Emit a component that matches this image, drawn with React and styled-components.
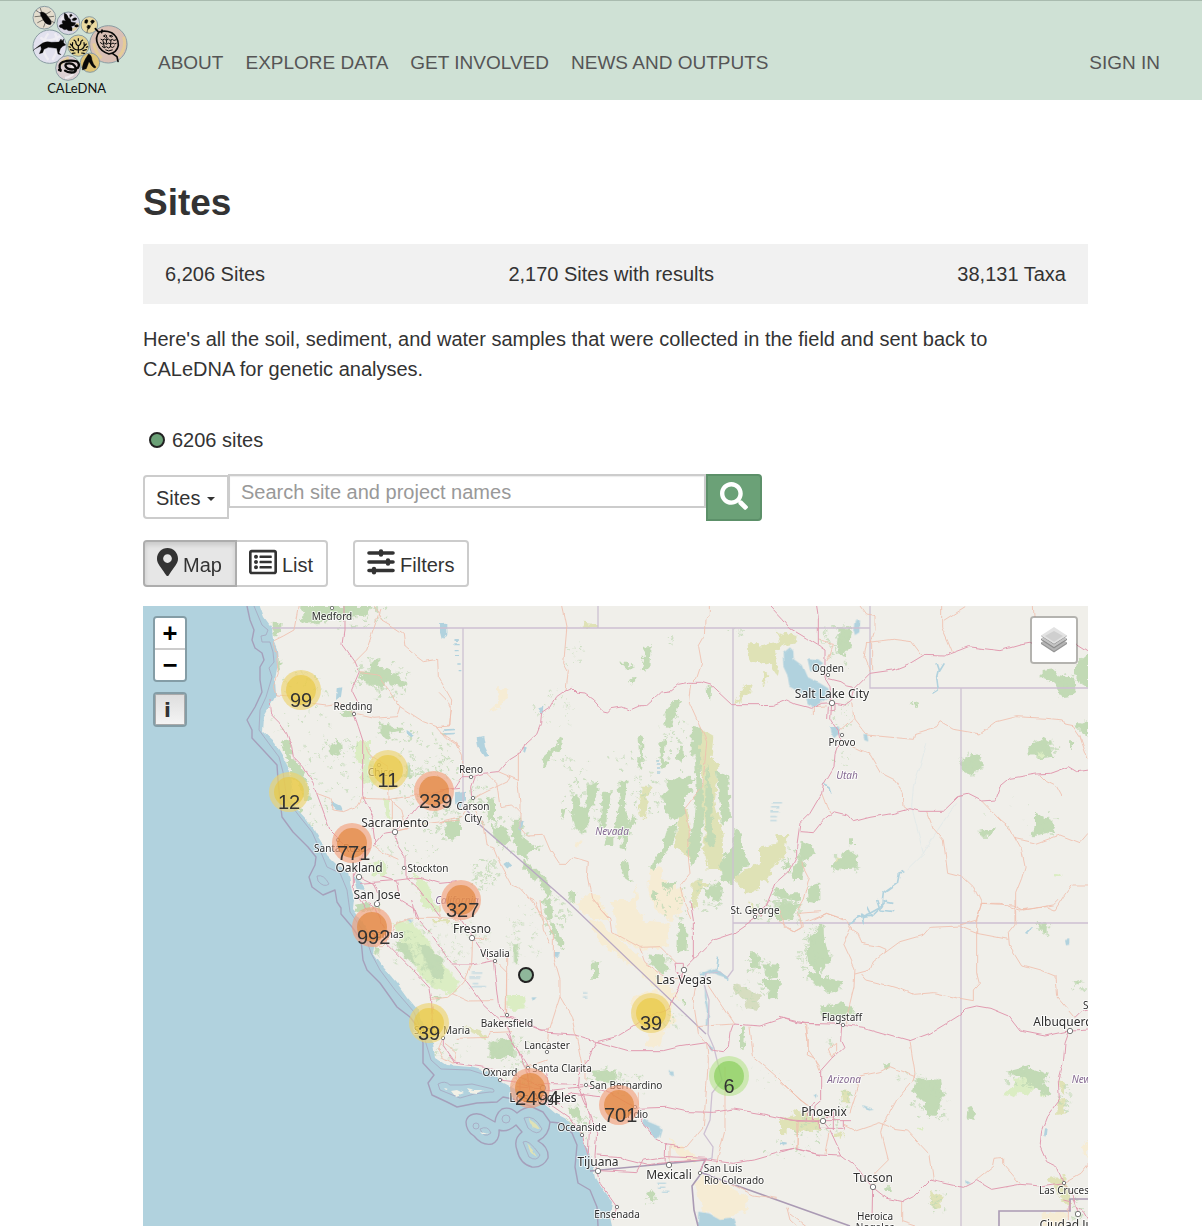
import React from "react";
import styled, { createGlobalStyle, css } from "styled-components";
import { FaMapMarkerAlt, FaRegListAlt, FaSearch } from "react-icons/fa";

const GlobalStyle = createGlobalStyle`
  *, *::before, *::after { box-sizing: border-box; }
  body {
    margin: 0;
    background: #fff;
    color: #333;
    font: 20px/30px "Liberation Sans", Arial, sans-serif;
  }
  button, input, select { font: inherit; color: inherit; margin: 0; }
`;

const Header = styled.header`
  display: flex;
  align-items: flex-start;
  height: 100px;
  padding: 0 42px 0 25px;
  background: #cfe1d5;
  border-top: 1px solid #a9bbaf;
`;

const LogoLink = styled.a`
  display: block;
  flex: none;
  width: 110px;
  height: 99px;
  margin-right: 23px;
`;

const Nav = styled.nav`
  display: flex;
  flex: 1;
  gap: 22px;
  padding-top: 47px;
  font-size: 19px;
`;

const NavLink = styled.a`
  color: #555;
  text-decoration: none;
  white-space: nowrap;
  ${(p) => p.$end && css`margin-left: auto;`}
`;

const Main = styled.main`
  padding: 80px 114px 0 143px;
`;

const Title = styled.h1`
  margin: 0 0 18px;
  font-size: 37px;
  line-height: 46px;
  font-weight: 700;
`;

const Stats = styled.div`
  display: flex;
  justify-content: space-between;
  padding: 15px 22px;
  background: #f1f1f1;
`;

const Intro = styled.p`
  margin: 20px 0 41px;
  padding-right: 20px;
`;

const Count = styled.div`
  display: flex;
  align-items: center;
  gap: 7px;
  padding-left: 6px;
`;

const Dot = styled.span`
  width: 16px;
  height: 16px;
  border: 2px solid #222;
  border-radius: 50%;
  background: #6ba177;
`;

const SearchForm = styled.form`
  display: flex;
  align-items: flex-start;
  width: 619px;
  max-width: 100%;
  margin-top: 19px;
`;

const ScopeBox = styled.label`
  position: relative;
  flex: none;
  margin-top: 1px;
  svg {
    position: absolute;
    right: 14px;
    top: 22px;
    pointer-events: none;
  }
`;

const Scope = styled.select`
  appearance: none;
  display: block;
  width: 86px;
  height: 44px;
  padding: 2px 11px 0;
  border: 2px solid #ccc;
  border-radius: 4px 0 0 4px;
  background: #fff;
`;

const SearchInput = styled.input`
  flex: 1;
  min-width: 0;
  height: 34px;
  margin-left: -1px;
  padding: 2px 11px 0;
  border: 2px solid #ccc;
  border-radius: 0;
  background: #fff;
  box-shadow: inset 0 1px 1px rgba(0, 0, 0, 0.08);
  &::placeholder { color: #999; opacity: 1; }
`;

const SearchButton = styled.button`
  display: flex;
  align-items: center;
  justify-content: center;
  width: 56px;
  height: 47px;
  padding: 0 0 3px;
  color: #fff;
  background: #6ba177;
  border: 2px solid #5c9069;
  border-radius: 0 4px 4px 0;
`;

const Toolbar = styled.div`
  display: flex;
  gap: 25px;
  margin: 19px 0;
`;

const Group = styled.div`
  display: flex;
`;

const ToolButton = styled.button`
  display: flex;
  align-items: center;
  gap: 5px;
  height: 47px;
  padding: 0 13px 0 12px;
  border: 2px solid #ccc;
  border-radius: ${(p) => p.$radius || "4px"};
  background: #fff;
  svg { margin-bottom: 3px; }
  span { padding-top: 3px; }
  & + & { margin-left: -2px; }
  ${(p) => p.$active && css`
    position: relative;
    z-index: 1;
    background: #e6e6e6;
    border-color: #adadad;
    box-shadow: inset 0 3px 5px rgba(0, 0, 0, 0.13);
  `}
`;

const PinIcon = styled(FaMapMarkerAlt)`
  width: 21px;
  height: 28px;
`;

const MapFrame = styled.section`
  position: relative;
  height: 620px;
  overflow: hidden;
  background: #f0efea;
`;

const Tiles = styled.svg`
  display: block;
`;

const MapLabel = styled.text`
  font-family: "Noto Sans", sans-serif;
  font-size: ${(p) => (p.$big ? "12px" : "10px")};
  font-style: ${(p) => (p.$state ? "italic" : "normal")};
  fill: ${(p) => (p.$state ? "#856a92" : "#2e2e2e")};
  text-anchor: middle;
  paint-order: stroke;
  stroke: rgba(255, 255, 255, 0.75);
  stroke-width: 2px;
  stroke-linejoin: round;
`;

const tones = {
  yellow: ["rgba(236, 211, 110, 0.65)", "rgba(233, 198, 60, 0.6)"],
  orange: ["rgba(242, 160, 125, 0.65)", "rgba(224, 132, 55, 0.65)"],
  green: ["rgba(181, 226, 140, 0.6)", "rgba(118, 200, 70, 0.55)"],
};

const Cluster = styled.button`
  position: absolute;
  left: ${(p) => p.$x}px;
  top: ${(p) => p.$y}px;
  width: 40px;
  height: 40px;
  padding: 5px;
  border: 0;
  border-radius: 50%;
  background: ${(p) => tones[p.$tone][0]};
  span {
    display: block;
    width: 30px;
    height: 30px;
    border-radius: 50%;
    line-height: 50px;
    text-align: center;
    white-space: nowrap;
    background: ${(p) => tones[p.$tone][1]};
  }
`;

const SiteMarker = styled.button`
  position: absolute;
  left: ${(p) => p.$x}px;
  top: ${(p) => p.$y}px;
  width: 16px;
  height: 16px;
  padding: 0;
  border: 2px solid #222;
  border-radius: 50%;
  background: #8fb79b;
`;

const Controls = styled.div`
  position: absolute;
  top: 10px;
  ${(p) => p.$side}: 10px;
  display: flex;
  flex-direction: column;
  gap: 10px;
`;

const ControlBar = styled.div`
  border: 2px solid rgba(0, 0, 0, 0.25);
  border-radius: 4px;
  background-clip: padding-box;
  overflow: hidden;
`;

const ControlButton = styled.button`
  display: flex;
  align-items: center;
  justify-content: center;
  width: ${(p) => p.$size || 30}px;
  height: ${(p) => p.$size || 30}px;
  padding: 0;
  border: 0;
  background: #fff;
  color: #000;
  font: 700 24px/28px "DejaVu Sans Mono", monospace;
  & + & { height: 32px; border-top: 2px solid #ccc; }
`;

const InfoButton = styled.button`
  display: block;
  width: 30px;
  height: 31px;
  padding: 0 8px;
  border: 1px solid #aaa;
  background: linear-gradient(#dedede, #f4f4f4);
  text-align: left;
  font: 700 20px/30px "DejaVu Sans", sans-serif;
`;

/* Map drawing ---------------------------------------------------------- */

function scatter(cx, cy, rx, ry, count, size) {
  let seed = Math.round(cx * 31 + cy * 17) % 9973 + 7;
  const next = () => {
    seed = (seed * 16807) % 2147483647;
    return seed / 2147483647;
  };
  for (let i = 0; i < 5; i += 1) next();
  let d = "";
  for (let i = 0; i < count; i += 1) {
    const a = next() * 6.283;
    const r = Math.sqrt(next());
    const w = size * (0.4 + next());
    const h = size * (0.4 + next());
    const x = Math.round(cx + Math.cos(a) * r * rx);
    const y = Math.round(cy + Math.sin(a) * r * ry);
    d += `M${x} ${y}h${w.toFixed(1)}l${(w / 3).toFixed(1)} ${h.toFixed(1)}h${(-w).toFixed(1)}z`;
  }
  return d;
}

const FOREST = "#c2dab5";
const MEADOW = "#dbedc3";
const SCRUB = "#dfe2b6";
const SAND = "#f6ecd4";
const WATER = "#b1d2de";

/* Each sheet is surveyed at three units to the pixel from its own origin. */
const sheets = [
  {
    x: 140, y: 600,
    areas: [
      [MEADOW, "M650 430 690 425 690 470 720 520 700 560 660 540 670 500 645 480ZM690 790 730 780 745 820 700 830ZM730 600 750 600 752 660 738 650ZM820 820 860 850 900 940 850 920Z"],
      [FOREST, "M480 18 690 18 680 40 640 55 600 50 570 60 530 68 500 72 480 60 495 40ZM395 65 425 68 422 100 405 112 395 90ZM690 185 715 180 715 200 745 205 755 225 775 215 775 235 790 240 800 250 780 262 740 245 735 265 715 262 690 250 660 238 665 215 690 215ZM720 365 760 380 790 380 785 395 755 400 745 420 722 400ZM572 435 600 425 603 460 580 470 568 455ZM425 425 450 420 455 470 480 500 500 540 510 570 512 600 495 610 480 560 455 530 440 480ZM595 340 640 330 640 345 610 350ZM645 915 690 905 700 930 650 940ZM920 665 960 655 960 710 920 715ZM800 490 815 510 810 535 795 530ZM412 185 420 180 422 200 412 212ZM475 630 490 628 490 640 478 640Z"],
      [WATER, "M900 70 920 68 922 105 912 120 900 100ZM570 605 600 620 605 632 590 630 572 615ZM640 830 665 850 678 870 650 868ZM800 390 822 405 815 412 800 402ZM590 265 604 262 600 290 588 300ZM908 388 942 386 942 389 908 391ZM908 400 942 398 942 401 908 403ZM942 118 954 118 954 122 942 122ZM942 132 956 132 956 136 942 136ZM944 150 956 150 956 154 944 154ZM950 600 960 580 960 620Z"],
    ],
    flecks: [[620, 40, 130, 40, 50, 9], [720, 230, 90, 70, 60, 8], [760, 390, 60, 40, 26, 7], [480, 350, 90, 150, 60, 5], [590, 440, 50, 40, 20, 6], [520, 560, 80, 130, 50, 5], [860, 460, 90, 80, 60, 6], [800, 560, 60, 60, 30, 6], [900, 660, 60, 60, 50, 8], [650, 520, 50, 110, 40, 5], [800, 780, 120, 70, 40, 5]],
    main: ["M612 18 612 90 606 130 645 185 658 215 635 270 655 310 642 342 655 380 668 420 668 590 700 650 700 690 706 735", "M764 695 730 700 700 735 670 760 655 800 640 830", "M764 695 775 740 795 770 795 830 830 860 870 910 900 950", "M764 695 800 660 840 610 880 580 920 570 960 565", "M657 830 700 850 720 900 710 912M640 820 640 870 660 900 680 930M660 850 760 842 840 832 900 850 950 845M725 830 770 845 780 900 820 925 835 960", "M530 580 545 620 570 690 600 720 640 760", "M390 300 395 345 420 370 440 400 455 440 460 470 490 500 520 550 530 580"],
    minor: ["M475 18 462 90 430 108 398 124 408 160 415 220 400 260 408 285 450 288 500 308 560 315 600 310 642 342", "M700 18 725 60 760 80 790 100 795 140 830 170 850 185 893 178 895 230 935 300 930 375 890 380 850 365 780 320 715 225 660 218", "M720 30 700 90 680 150 640 190", "M642 342 700 355 770 350 780 320M890 380 920 415 960 440", "M668 420 690 465 745 500 747 600 757 600 757 690", "M530 580 570 595 580 630 610 635 650 620 665 595 750 598 830 585 870 575M700 735 725 755 775 778M750 600 785 630 800 690 765 696M775 695 860 670 960 660"],
  },
  {
    x: 440, y: 600,
    areas: [
      [SAND, "M175 265 205 265 203 290 180 320 150 340 170 310ZM408 720 425 722 420 745 412 740ZM630 810 665 800 665 830 690 850 715 860 735 880 725 940 690 960 640 920 625 870ZM430 890 470 880 490 920 510 960 460 960 410 920ZM590 855 595 900 580 905Z"],
      [SCRUB, "M770 380 820 410 815 470 835 500 825 600 848 700 850 810 800 810 790 740 795 690 780 600 790 520 770 500ZM715 640 745 630 750 700 750 780 705 740ZM755 850 780 840 805 850 780 880 770 920 752 920ZM885 830 960 785 960 870 920 880 890 850ZM430 68 472 72 470 82 428 80ZM920 130 960 130 960 190 925 180ZM910 260 935 245 930 280 885 310ZM605 560 635 560 620 600 615 660 598 640Z"],
      [FOREST, "M610 140 632 138 628 200 618 218 605 210 612 180ZM540 185 560 185 582 205 565 210ZM572 235 588 235 580 255 570 245ZM705 300 720 300 705 350 690 380 670 375 680 330ZM360 410 370 415 365 445 335 465 315 500 305 505 315 465 345 440ZM595 410 607 400 610 440 603 510 590 500 600 455ZM655 430 680 410 672 480 690 490 665 510ZM720 440 732 440 728 490 710 475ZM535 545 560 545 555 600 560 640 570 670 585 640 590 660 570 690 560 750 545 745 545 715 520 705 525 660 540 610ZM440 560 475 545 465 610 445 640 445 690 410 695 395 640 398 590 415 585 418 620 440 620ZM490 575 515 570 512 620 500 650 500 680 478 685 480 640ZM500 710 520 710 520 745 490 735ZM360 625 378 620 368 660ZM680 540 740 530 765 540 745 560 760 575 735 590 735 640 700 660 675 640 668 580 680 570ZM680 690 710 665 705 710 670 775 640 810 630 805 640 775 665 755ZM755 380 785 385 780 450 785 580 790 640 780 760 755 800 740 740 760 680 765 600 770 560 765 480 755 450ZM830 510 865 530 870 665 845 675 838 600ZM800 490 820 600 815 680 830 740 800 730 795 600ZM855 760 880 740 880 690 895 680 910 750 930 795 910 800 880 850 850 845 840 800ZM540 795 558 780 565 820 575 850 555 835ZM665 850 705 845 695 865 668 865ZM790 870 840 850 845 905 800 890ZM640 870 652 875 650 905 640 900ZM220 655 240 660 245 710 290 745 315 740 260 760 260 780 235 765 215 710ZM150 675 200 680 210 730 180 735ZM250 780 280 800 320 840 340 880 320 890 300 845 250 810ZM310 890 330 895 340 960 320 960ZM20 665 60 665 60 710 20 705ZM140 590 165 600 165 660 145 665ZM385 880 410 875 405 905 385 900ZM800 260 815 258 810 305 802 290Z"],
      [WATER, "M110 412 130 408 135 440 148 468 135 470 115 440ZM48 580 75 575 75 600 60 625 48 610ZM0 70 22 70 22 100 5 120 0 100ZM190 795 205 785 215 795 200 807ZM238 660 250 665 245 695 238 685ZM252 440 260 442 255 458 250 455ZM295 325 310 320 308 345ZM40 118 52 118 52 122 40 122ZM40 130 52 130 52 134 40 134ZM48 165 58 165 58 168 48 168ZM52 190 62 190 62 194 52 194ZM56 210 64 210 64 214 56 214ZM646 478 658 478 658 482 646 482ZM647 490 658 490 658 494 647 494ZM648 502 658 502 658 506 648 506ZM648 514 658 514 658 518 648 518ZM10 390 42 388 42 391 10 393ZM10 402 40 400 40 403 10 405Z"],
    ],
    flecks: [[400, 150, 30, 50, 16, 5], [350, 320, 70, 60, 30, 4], [690, 420, 50, 120, 40, 6], [380, 500, 70, 40, 14, 6], [620, 580, 50, 70, 40, 7], [420, 610, 60, 80, 30, 7], [130, 820, 50, 50, 50, 7], [120, 600, 40, 70, 40, 6], [690, 900, 60, 60, 30, 7], [200, 700, 60, 60, 40, 7], [800, 880, 60, 50, 30, 7], [15, 500, 60, 50, 30, 6], [690, 115, 15, 20, 9, 6], [880, 95, 30, 12, 8, 5], [560, 480, 60, 50, 14, 6]],
    main: ["M0 570 45 565 68 530 100 530 130 520 175 515 205 480 245 455 255 432 290 400 302 370 305 340 332 322 350 290 375 272 397 262 415 280 435 282 460 300 490 333 503 336 512 326 545 321 568 331 600 317 620 317 650 290 665 276 690 273 715 253 745 247 785 247 812 255 875 314 960 314", "M103 530 92 560 95 592"],
    minor: ["M365 18 372 50 380 90 371 190 385 215 378 270", "M808 18 808 45 795 60 793 110 776 140 785 190 770 235 755 250 748 310 775 370 800 425 788 560 770 580 735 625 748 690 745 770 750 820 722 855 735 910 752 960", "M235 458 235 560 240 610 240 680 262 705 310 703 330 750 358 793 380 793 400 772 445 785 442 830 455 895 510 960", "M140 520 170 550 180 620 215 615 240 640M175 515 210 530 200 545 120 585 95 600M0 380 28 378 34 330 20 300 0 280M0 395 50 430 68 470 68 530M0 665 65 650 90 610 130 665 142 735 160 740 180 790 215 855 240 865 265 895 285 905 305 960M205 525 235 538"],
  },
  {
    x: 760, y: 600,
    areas: [
      [SCRUB, "M50 95 110 110 105 130 60 140 45 150 55 200 50 225 30 195 0 190 0 140 30 130 60 125ZM15 215 25 225 10 265 5 245ZM50 705 82 705 75 770 45 790 20 850 0 840 0 745 45 735ZM230 770 250 770 250 790 225 795Z"],
      [FOREST, "M235 85 275 85 272 140 250 170 235 150ZM845 210 880 205 895 225 940 235 950 255 940 290 900 295 890 260 865 235 845 230ZM945 195 984 160 984 265 960 250 945 225ZM945 375 984 360 984 410 965 395ZM605 480 650 462 665 470 665 500 635 520 605 515ZM805 440 850 412 870 425 880 470 840 475 810 460ZM825 640 845 650 880 660 880 695 815 710 825 680ZM658 692 708 682 695 710 665 710ZM125 725 160 740 165 760 135 780 125 840 95 840 88 820 115 780ZM215 800 240 770 265 750 295 770 290 805 230 810ZM145 860 178 850 178 910 140 905ZM45 860 85 880 120 880 120 905 75 895 40 880ZM70 790 92 785 92 805 72 810ZM262 715 282 715 282 735 265 732ZM460 300 480 308 468 318 455 312ZM930 420 943 425 930 448ZM45 935 100 945 100 960 45 960Z"],
      [MEADOW, "M885 822 905 824 900 834 885 832ZM830 455 850 450 855 468 835 470Z"],
      [WATER, "M68 160 90 142 97 150 98 175 125 195 140 230 180 250 205 265 210 290 160 322 140 310 135 285 88 260 82 225 70 200ZM142 175 175 178 190 190 175 200 180 215 150 210ZM285 60 300 58 298 100 285 108 280 90ZM212 382 235 382 242 400 232 405 222 415 214 400ZM35 610 66 610 66 613 35 613ZM33 622 58 622 58 625 33 625ZM31 634 56 634 56 637 31 637ZM31 648 48 648 48 651 31 651ZM31 660 47 660 47 663 31 663ZM310 405 322 405 325 425 313 420Z"],
    ],
    flecks: [[210, 110, 30, 40, 30, 6], [250, 110, 25, 40, 20, 7], [630, 490, 35, 30, 40, 7], [850, 445, 45, 30, 30, 7], [250, 340, 40, 50, 24, 5], [100, 790, 40, 50, 20, 7], [70, 915, 50, 30, 36, 8], [255, 785, 45, 35, 20, 7], [850, 670, 40, 40, 20, 6], [250, 470, 40, 30, 10, 4], [900, 240, 50, 45, 12, 7], [740, 640, 90, 60, 10, 3], [230, 180, 30, 30, 16, 6]],
    main: ["M30 18 65 55 90 85 140 115 172 135 195 150 195 235 210 260 215 308", "M170 18 175 50 175 135", "M0 317 40 316 80 300 105 312 155 325 185 310 215 308 255 315 275 300 285 265 330 220 400 210 450 190 490 166 550 168 600 150 625 140 720 152 780 135 820 128 950 130 984 152", "M215 308 212 360 235 395 240 420 225 460 222 500 190 555 185 580 150 640 120 670 110 740 110 770 90 810 45 850 20 910 0 950", "M120 695 160 698 190 660 220 635 262 645 280 665 330 652 400 640 450 626 480 634 550 634 595 590 625 583 665 603 705 600 720 560 750 535 830 522 870 520 925 500 950 515 984 510", "M200 235 240 245 260 258 280 262M205 320 203 360M225 310 225 330 205 335"],
    minor: ["M300 18 320 45 345 50 345 90 335 120 335 210M320 128 400 118 455 125 485 165M545 18 545 80 565 125 578 158M550 65 620 20M820 18 822 50M320 125 312 170 330 215", "M235 395 280 355 320 405 460 418 465 400 530 380 540 365 580 388 660 402 710 365 770 350 860 355 910 360 915 375 940 380 960 410 984 480", "M240 420 300 450 330 460 365 520 405 540 430 580 432 620 445 630", "M500 635 520 685 550 720 563 820 610 832 640 860 665 910 650 960M665 603 720 660 745 680 765 715 785 750 795 800 785 835 767 880 767 960M665 910 720 910 780 930 860 920 885 930 910 890 935 855 984 855M765 715 830 730 900 705 960 728 984 700M840 525 860 545 890 560 905 588M185 580 200 620 210 640M125 785 148 830 130 900 108 940M160 960 200 940 250 960M275 310 282 355M160 345 160 320 200 318M175 120 220 130 210 165 200 180"],
    streams: ["M528 190 535 210 530 230 535 270 520 280M550 190 535 215M418 820 412 850 370 880 365 920 330 940 290 955M430 815 415 820M370 905 400 910M190 550 210 560 215 580"],
    creeks: ["M500 430 480 500 460 560 455 620 470 680 490 760 520 710 560 650 590 610M490 760 440 810"],
  },
  {
    x: 230, y: 900,
    areas: [
      [SAND, "M690 0 720 10 700 40 670 30Z"],
      [MEADOW, "M490 70 545 65 580 100 640 190 690 250 665 285 610 265 570 220 520 150ZM830 285 890 285 885 320 850 330 828 320Z"],
      [FOREST, "M560 130 600 140 640 180 640 230 610 235 590 190ZM500 120 530 130 560 190 540 190 505 150ZM780 425 850 415 855 470 775 475ZM435 140 450 145 445 170 435 165ZM850 130 865 130 862 190 852 190ZM430 20 445 15 450 40ZM600 290 640 290 620 300ZM940 30 960 30 960 60Z"],
      [SCRUB, "M700 380 750 390 775 415 740 410ZM600 60 660 60 650 70 610 70Z"],
      [WATER, "M722 218 760 218 760 221 722 221ZM718 230 755 230 755 233 718 233ZM728 246 748 246 748 249 728 249ZM720 258 768 258 768 261 720 261ZM905 290 920 290 908 302ZM535 55 550 60 540 70Z"],
    ],
    flecks: [[610, 130, 110, 80, 50, 6], [520, 150, 50, 60, 30, 6], [810, 450, 45, 40, 30, 7], [880, 100, 60, 90, 40, 6], [660, 450, 60, 30, 24, 5], [700, 110, 80, 50, 40, 4], [590, 220, 50, 40, 20, 6]],
    main: ["M545 0 555 50 600 100 650 170 700 235 760 315 830 380 845 420 890 490 900 520", "M470 130 545 205 600 265 605 300 605 340", "M665 195 725 195 790 182 795 230 805 310 830 345M830 345 880 370 930 390 960 390", "M665 0 690 50 720 95 728 112 775 180M400 0 430 15 450 60 475 120M640 415 640 440 675 490 750 500 795 510M810 540 850 545 900 560M605 315 610 350 600 400"],
    minor: ["M470 130 500 70 545 55 630 55 690 60M605 298 650 292 665 280 715 303 790 302M665 285 700 245 725 190 728 115 770 115M795 185 830 220 828 345M640 415 625 450 635 470 670 490 677 455 645 430M680 415 775 412 780 398 845 395M630 0 630 55M930 0 940 90 960 130M435 140 460 140 470 130"],
  },
  {
    x: 500, y: 900,
    areas: [
      [SAND, "M335 0 400 0 430 60 510 70 500 140 420 150 350 110ZM265 60 300 70 420 170 500 250 540 300 500 290 400 200 300 130ZM395 290 460 270 520 300 510 340 530 360 490 400 480 440 440 435 450 390 400 380ZM580 850 610 825 660 840 745 890 740 930 660 965 610 930ZM500 710 590 770 585 790 540 775ZM220 0 280 40 260 50Z"],
      [FOREST, "M540 60 562 100 560 150 530 158ZM440 160 490 165 510 210 490 225 455 195ZM278 185 298 182 295 240 280 240ZM155 60 190 130 185 150 150 90ZM270 510 320 505 360 530 330 550 290 540ZM720 380 735 385 732 450 720 440ZM925 120 960 80 960 240 930 190ZM750 160 775 160 780 200 750 205ZM790 190 835 195 830 230 800 235ZM785 240 840 240 835 290 810 300 800 270ZM440 875 460 868 460 900 442 895ZM545 300 552 300 552 318 545 312ZM200 620 230 620 250 670 220 650ZM840 10 865 15 860 30 845 30ZM0 430 35 430 30 470 0 470Z"],
      ["#d6ddc0", "M700 250 730 260 785 290 770 330 740 325 735 300 705 280Z"],
      [MEADOW, "M20 290 75 285 70 325 30 330Z"],
      [SCRUB, "M895 655 960 650 960 690 900 695ZM740 0 780 40 760 30Z"],
      [WATER, "M430 652 445 665 480 680 488 690 480 715 465 715 450 690 432 675ZM620 215 650 205 655 170 650 210 685 235 640 220ZM595 220 625 220 620 230ZM610 250 618 290 628 340 622 380 617 380 620 330 612 290ZM160 155 178 155 170 172 160 170ZM472 848 498 848 498 851 472 851ZM474 860 496 860 496 863 474 863ZM486 872 508 872 508 875 486 875ZM592 999 595 935 625 940 660 960 700 955 715 999ZM248 280 262 280 262 283 248 283ZM246 292 262 292 262 295 246 295ZM505 514 520 514 522 530 508 520ZM95 290 110 290 100 302ZM628 430 640 445 636 455 628 445Z"],
    ],
    flecks: [[520, 360, 40, 30, 20, 5], [930, 160, 40, 90, 50, 7], [770, 190, 40, 30, 20, 6], [820, 30, 70, 35, 40, 7], [165, 40, 50, 60, 30, 7], [310, 540, 60, 40, 40, 6], [240, 680, 50, 70, 50, 6], [40, 440, 50, 40, 30, 5], [390, 560, 50, 50, 24, 5], [740, 280, 50, 50, 24, 6], [780, 540, 90, 40, 14, 3], [860, 750, 80, 30, 20, 4], [480, 190, 40, 40, 16, 6], [60, 520, 60, 40, 30, 6], [260, 830, 40, 90, 20, 4], [450, 890, 15, 25, 14, 5]],
    main: ["M0 350 40 350 100 380 145 400 225 405 290 425 385 452 490 452 540 440 620 428 635 450 670 455 685 440 690 400 700 372 780 378 850 355 900 370 960 372", "M290 425 350 410 400 380 440 350 490 335 510 320 540 250 550 210 580 180 640 120 700 100 765 55 790 25 810 0", "M288 425 265 480 240 510 235 560 250 600 270 640 290 700 285 770 290 812 300 850 350 920", "M100 550 200 552 258 555 330 580 410 625 500 622 560 635 640 637 700 627 780 640 870 660 960 665", "M290 765 360 770 380 780 440 795 520 785 620 780 700 790 760 780 830 760 880 745 960 765", "M35 520 80 540 120 560 130 600 160 620 210 655 245 700 265 770M60 540 60 600M80 505 90 580 150 620M50 560 160 570 250 560M140 520 150 590 190 620M300 590 220 580 170 600M250 580 270 650 265 760M20 400 55 450 75 505M415 625 430 670 470 720 500 735 540 740M300 812 410 818 430 780 500 770 620 775 600 815M570 0 580 60 580 180M525 190 550 190 550 210M525 190 528 215 545 225M497 735 495 790M350 920 340 960"],
    minor: ["M90 0 130 50 160 100 160 170 180 240 180 290 145 400 140 455M180 290 215 350 235 440 245 490M140 480 70 505M275 0 330 60 335 95 420 142 480 140 530 190M420 145 435 190 500 235 550 230M590 240 580 300 595 400 620 430M620 250 660 310 700 370M590 380 700 372M620 430 625 480 620 560 610 680 560 740 520 740M675 500 675 690 650 790M750 380 760 470 830 530 900 600 930 620M920 375 925 450 960 500M830 60 880 95 910 80 900 40 960 35M895 665 890 745M510 735 510 790M690 850 760 885 830 895M865 920 870 940 920 978M415 580 415 625M20 170 20 350M255 480 255 540"],
    streams: ["M600 225 650 212 685 235M655 170 650 210M840 728 860 730"],
  },
  {
    x: 780, y: 900,
    areas: [
      [SAND, "M785 940 860 935 860 999 785 999ZM905 735 924 725 924 780 912 760Z"],
      [SCRUB, "M835 595 858 595 855 640 828 645ZM800 835 855 825 870 870 870 920 845 900ZM450 870 485 890 480 920 455 925ZM0 660 60 640 55 690 0 690ZM40 630 85 640 80 690 50 700ZM85 680 110 680 100 700ZM160 700 190 690 185 720ZM0 670 20 670 20 700 0 700ZM838 545 855 545 855 580 845 580ZM185 575 212 575 208 610 190 610Z"],
      [FOREST, "M120 70 130 70 133 120 155 180 130 210 85 170 90 110 115 95ZM80 210 130 230 190 245 180 270 145 280 110 250 85 230ZM125 320 180 310 220 320 215 350 170 355 120 345ZM0 10 60 10 40 50 20 60 0 50ZM410 535 480 540 490 590 470 640 450 650 430 610 400 570ZM680 515 740 500 800 520 790 550 815 580 795 595 775 570 740 560 710 530ZM563 625 575 618 588 645 580 660 560 655ZM310 490 328 490 325 508 310 505ZM313 862 332 862 332 873 313 873ZM770 70 800 70 800 100 780 90ZM880 245 904 240 895 260ZM150 340 160 320 175 345Z"],
      [MEADOW, "M700 540 740 535 760 565 740 590 720 575 690 590 670 585 685 565 705 562ZM780 575 800 590 790 592ZM410 680 440 682 425 690Z"],
      [WATER, "M795 685 803 685 800 710 792 705ZM245 615 280 628 265 632 250 622ZM0 725 20 730 10 735ZM855 120 868 118 868 134 858 136ZM100 585 110 585 108 598ZM555 840 570 850 558 852Z"],
    ],
    flecks: [[30, 30, 40, 40, 26, 8], [110, 140, 40, 60, 30, 7], [170, 335, 55, 25, 30, 7], [440, 590, 60, 70, 60, 7], [380, 530, 50, 20, 14, 5], [740, 530, 70, 30, 24, 8], [470, 900, 25, 40, 20, 6], [110, 680, 80, 50, 40, 7], [785, 85, 25, 20, 12, 6], [200, 600, 25, 30, 20, 6], [480, 652, 20, 10, 8, 5], [890, 250, 25, 20, 12, 6], [850, 600, 20, 60, 20, 7], [880, 930, 30, 40, 16, 7], [145, 420, 12, 12, 8, 5]],
    main: ["M0 352 75 370 190 373 250 382 330 405 390 422 450 400 500 370 540 345 560 325 590 318 630 325 685 348 720 393 795 408 868 393 900 392 924 390", "M868 393 855 430 850 490 835 545 838 598 800 650 785 690 780 740 800 785 830 800 850 848 880 890 895 940", "M188 375 185 420 195 440 155 478 122 515 122 605 105 620 100 660", "M0 652 50 664 128 662 150 690 185 765 230 800 255 835 278 862 320 895 370 905 400 890 450 840 550 862 590 842 635 868 720 853 780 858 850 848", "M0 752 45 745 110 762 185 765", "M128 662 210 662M160 635 160 690M118 662 118 685 190 685 190 662M140 650 180 650M105 610 82 625 82 662", "M278 862 276 960M880 900 890 925 910 935 924 960M850 900 870 905 870 930M885 355 905 335 924 330"],
    minor: ["M0 30 10 80 40 95 65 80 55 40M80 65 140 40 200 60 212 85 190 130 225 205 222 260 205 330 200 370M212 85 235 100 245 130 300 140 318 148 315 158 280 185 270 210 225 222M315 158 360 125 430 105 450 82 540 78M245 222 260 240 320 255 370 270 400 283 460 278 540 295 580 302 580 270 598 250 590 220 590 55 605 10 700 15 730 30 820 15 835 0", "M540 80 590 100 685 118M705 0 705 75 685 100 688 135 725 195 780 210 825 228 830 290 860 325 885 355", "M390 425 405 520 400 540 350 600 312 670 305 700 325 780 285 820 285 850M75 370 85 420 82 465 105 475 120 515M170 430 145 450 155 475 170 450ZM235 560 230 530 300 515 330 500 405 530M235 560 210 640M190 672 230 692 300 668 340 685 380 690 450 765 460 840M0 545 80 615M50 664 52 745M148 690 135 760M365 905 365 965 405 978M590 840 640 800 645 775 668 772 668 790 720 850M850 848 900 820 924 790M865 925 865 960M540 75 590 60M20 920 30 960 50 978"],
    streams: ["M320 0 300 25 280 45 235 50 205 75M290 0 300 30M340 35 300 30M260 20 275 50M245 40 250 70M740 100 760 80"],
  },
];

const mapLabels = [
  ["Medford", 332, 620], ["Redding", 353, 710], ["Chico", 381, 776], ["Reno", 471, 773],
  ["Carson", 473, 810], ["City", 473, 822], ["Sacramento", 395, 827, "big"], ["Santa Rosa", 340, 852],
  ["Oakland", 359, 872, "big"], ["Stockton", 428, 872], ["San Jose", 377, 899, "big"], ["California", 457, 904, "state"],
  ["Salinas", 387, 938], ["Fresno", 472, 933, "big"], ["Visalia", 495, 957], ["Bakersfield", 507, 1027],
  ["Santa Maria", 442, 1034], ["Lancaster", 547, 1049], ["Santa Clarita", 562, 1072], ["Oxnard", 500, 1076],
  ["San Bernardino", 626, 1089], ["Los Angeles", 543, 1102, "big"], ["Indio", 636, 1118], ["Oceanside", 582, 1131],
  ["Tijuana", 598, 1166, "big"], ["Mexicali", 669, 1179, "big"], ["San Luis", 723, 1172], ["Río Colorado", 734, 1184],
  ["Ensenada", 617, 1218], ["Nevada", 612, 835, "state"], ["Utah", 847, 779, "state"], ["Arizona", 844, 1083, "state"],
  ["Ogden", 828, 672], ["Salt Lake City", 832, 698, "big"], ["Provo", 842, 746], ["St. George", 755, 914],
  ["Las Vegas", 684, 984, "big"], ["Flagstaff", 842, 1021], ["Phoenix", 824, 1116, "big"], ["Tucson", 873, 1182, "big"],
  ["Heroica", 875, 1220], ["Nogales", 875, 1231], ["Albuquerque", 1070, 1026, "big"], ["Santa Fe", 1103, 1009],
  ["New Mexico", 1098, 1083, "state"], ["Las Cruces", 1064, 1194], ["Ciudad Juárez", 1078, 1229, "big"],
];

const towns = [
  [332, 608, 2], [354, 714, 2], [379, 765, 2], [395, 832, 3], [404, 868, 2], [359, 877, 3], [377, 904, 3],
  [338, 840, 2], [471, 777, 2], [473, 798, 2], [472, 938, 3], [495, 961, 2], [507, 1015, 2], [443, 1038, 2],
  [500, 1080, 2], [547, 1052, 2], [528, 1068, 2], [586, 1085, 2], [543, 1088, 3], [635, 1107, 2], [582, 1135, 2],
  [598, 1171, 3], [669, 1165, 3], [700, 1173, 2], [617, 1207, 2], [828, 675, 2], [832, 703, 3], [842, 735, 2],
  [755, 917, 2], [684, 970, 3], [843, 1025, 2], [823, 1121, 3], [873, 1187, 3], [1070, 1031, 3], [1064, 1183, 2],
  [1078, 1214, 3],
];

const OCEAN = "M143 590 258 590 260 606 264 617 272 628 273 640 277 650 278 663 275 680 276 695 272 703 264 717 263 732 275 743 283 757 288 767 292 787 290 797 295 807 307 820 315 832 322 843 327 855 337 865 348 872 351 887 354 900 353 910 363 923 375 943 373 953 383 967 397 983 407 997 418 1010 427 1033 433 1043 435 1057 447 1065 470 1067 490 1072 502 1082 517 1090 520 1102 543 1103 555 1113 568 1120 580 1133 588 1150 592 1163 595 1177 603 1190 612 1202 610 1217 615 1240 143 1240Z";
const OUTER_LIMIT = "M247 606 250 620 254 630 252 640 255 648 262 653 264 660 260 667 260 680 262 692 255 707 247 720 252 730 252 738 265 752 277 765 278 780 280 800 282 817 293 832 308 847 316 857 315 865 309 877 312 887 323 895 335 890 337 902 341 908 341 914 352 927 361 940 363 960 367 970 380 983 390 997 397 1007 410 1017 420 1030 423 1043 423 1063 434 1075 428 1083 432 1095 447 1102 457 1107 477 1103 497 1102 503 1097 513 1099 530 1106 543 1112 550 1122 560 1123 572 1133 577 1145 575 1167 578 1183 590 1190 597 1207 598 1226";
const INNER_LIMIT = "M254 606 262 625 268 630 266 635 261 636 262 642 270 642 273 652 274 662 269 668 272 677 266 697 260 710 259 730 270 745 279 757 283 772 287 800 300 817 312 832 320 850 327 867 340 873 347 890 350 912 364 932 371 953 380 970 395 990 414 1012 425 1040 431 1060 441 1069 470 1070 492 1077";

function MapTiles() {
  return (
    <Tiles width="945" height="620" viewBox="143 606 945 620" role="img" aria-label="Map of the southwestern United States">
      <defs>
        <filter id="ragged" filterUnits="userSpaceOnUse" x="123" y="586" width="985" height="660" colorInterpolationFilters="sRGB">
          <feTurbulence type="fractalNoise" baseFrequency="0.16" numOctaves="3" seed="4" />
          <feDisplacementMap in="SourceGraphic" scale="8" xChannelSelector="R" yChannelSelector="G" />
        </filter>
        <filter id="winding" filterUnits="userSpaceOnUse" x="123" y="586" width="985" height="660" colorInterpolationFilters="sRGB">
          <feTurbulence type="fractalNoise" baseFrequency="0.08" numOctaves="2" seed="9" />
          <feDisplacementMap in="SourceGraphic" scale="4" xChannelSelector="R" yChannelSelector="G" />
        </filter>
      </defs>
      <rect x="143" y="606" width="945" height="620" fill="#f0efea" />
      <g filter="url(#ragged)">
        {sheets.map((s) => (
          <g key={`${s.x}-${s.y}`} transform={`translate(${s.x} ${s.y}) scale(0.33333)`}>
            {s.areas.filter(([fill]) => fill !== WATER).map(([fill, d]) => <path key={fill} d={d} fill={fill} />)}
            {s.flecks.map((f) => <path key={f.join()} d={scatter(...f)} fill={FOREST} opacity="0.75" />)}
          </g>
        ))}
      </g>
      <g filter="url(#winding)">
        {sheets.map((s) => (
          <g key={`${s.x}-${s.y}`} transform={`translate(${s.x} ${s.y}) scale(0.33333)`}>
            {s.areas.filter(([fill]) => fill === WATER).map(([fill, d]) => <path key={fill} d={d} fill={fill} />)}
          </g>
        ))}
        <path d={OCEAN} fill={WATER} />
      </g>
      <path d="M143 606H250V1226H143Z" fill={WATER} />
      <g fill="none" stroke="#a5a0bb" strokeLinejoin="round">
        <path d={INNER_LIMIT} strokeWidth="0.7" />
        <path d={OUTER_LIMIT} strokeWidth="1.4" />
        <path strokeWidth="1.4" d="M466 1122C467 1114 477 1111 486 1117L495 1122Q496 1113 502 1109Q510 1106 517 1113Q524 1107 532 1107M466 1122Q466 1131 474 1136Q482 1146 492 1144Q500 1140 499 1130Q507 1133 516 1125L522 1132Q513 1139 517 1150Q520 1164 532 1167Q543 1168 548 1158Q549 1147 538 1141Q549 1136 550 1122" />
        <path strokeWidth="0.7" d="M438 1084Q445 1080 450 1085L462 1085 472 1084 493 1089Q496 1093 490 1092L474 1094 460 1098 450 1094 440 1090ZM480 1129Q488 1125 491 1133Q484 1139 480 1129ZM502 1119A4 4 0 1 0 510 1119A4 4 0 1 0 502 1119ZM473 1126A3 3 0 1 0 479 1126A3 3 0 1 0 473 1126ZM524 1118Q534 1114 542 1129Q538 1137 528 1128ZM523 1142Q528 1138 540 1155Q537 1162 529 1157ZM317 876Q324 874 329 884Q324 888 318 881Z" />
      </g>
      <g filter="url(#winding)">
        <path fill="#f2f1e7" d="M452 1091 458 1090 464 1093 456 1096ZM466 1088 474 1090 484 1090 478 1093 469 1092ZM443 1088 448 1089 445 1090ZM481 1131 488 1133 484 1134Z" />
        <path fill={SCRUB} d="M529 1119 536 1124 541 1130 534 1127 530 1123ZM527 1144 532 1149 537 1157 531 1153Z" />
      </g>
      <g fill="none" stroke="#cdc0d2" strokeWidth="1.3">
        <path d="M272 628H870M598 606V628M463 628V806M870 606V688H1088M733 628V970L727 978 720 972 706 973 704 984 709 1000 708 1034 714 1048 722 1080 712 1093 710 1120 704 1134 713 1147 712 1158 705 1160M733 923H1088M961 688V1226" />
        <path stroke="#b9a9c2" d="M463 806 480 825 568 902 706 1034" />
        <path stroke="#aa9ab4" strokeWidth="1.6" d="M590 1171 705 1160 700 1172 735 1185 850 1226M999 1226V1211H1070V1199H1088M700 1175 692 1186 694 1210 698 1226" />
      </g>
      <g fill="none" strokeLinejoin="round" filter="url(#winding)">
        {sheets.map((s) => (
          <g key={`${s.x}-${s.y}`} transform={`translate(${s.x} ${s.y}) scale(0.33333)`}>
            {s.creeks && <path d={s.creeks.join("")} stroke="#dde7e8" strokeWidth="2" />}
            {s.streams && <path d={s.streams.join("")} stroke={WATER} strokeWidth="5" />}
            <path d={s.minor.join("")} stroke="#f0bfae" strokeWidth="2.6" />
            <path d={s.main.join("")} stroke="#e19bb0" strokeWidth="3" />
          </g>
        ))}
      </g>
      {towns.map(([x, y, r]) => (
        <circle key={`${x}-${y}`} cx={x} cy={y} r={r - 0.3} fill="#fff" stroke="#777" strokeWidth="1" />
      ))}
      {mapLabels.map(([name, x, y, kind]) => (
        <MapLabel key={name} x={x} y={y} $big={kind === "big"} $state={kind === "state"}>{name}</MapLabel>
      ))}
    </Tiles>
  );
}

const clusters = [
  ["99", 138, 64, "yellow"], ["12", 126, 166, "yellow"], ["11", 225, 144, "yellow"], ["239", 271, 165, "orange"],
  ["771", 189, 217, "orange"], ["327", 298, 274, "orange"], ["992", 209, 301, "orange"], ["39", 266, 397, "yellow"],
  ["39", 488, 387, "yellow"], ["2494", 367, 462, "orange"], ["701", 456, 479, "orange"], ["6", 566, 450, "green"],
];

/* Icons ---------------------------------------------------------------- */

function Logo() {
  const bubbles = [
    [58, 53, 34, "#e3dccd"], [130, 70, 34, "#d9d6e4"], [193, 75, 25, "#ead9a0"], [74, 140, 50, "#e2e1ee"],
    [160, 137, 32, "#e4d28e"], [250, 133, 56, "#d9bfb4"], [129, 204, 37, "#dccfd2"], [195, 188, 29, "#dfc476"],
  ];
  return (
    <svg width="110" height="99" viewBox="0 3 330 297" role="img" aria-label="CALeDNA">
      {bubbles.map(([x, y, r, fill]) => (
        <circle key={x} cx={x} cy={y} r={r} fill={fill} stroke="#8a9ca3" strokeWidth="3" />
      ))}
      <g fill="none" stroke="#f3f0f4" strokeWidth="7" opacity="0.8">
        <path d="M70 100q-30 40 0 80M90 100q20 40-8 80M46 112q20 20 60-4M108 60q20-30 40 0M140 196q20 30-20 38M40 32l30 44" />
      </g>
      <g fill="none" stroke="#ead28a" strokeWidth="9" opacity="0.7">
        <path d="M296 110q10 30-14 60M206 130q6 30 24 44M142 90q14-4 16-20M105 195q10-14 26-22" />
      </g>
      <g fill="#080808" stroke="#080808" strokeLinecap="round" strokeLinejoin="round">
        <path d="M46 37q8-4 16 4l14 18q6 12 0 15-12 1-20-12L47 46Z" />
        <path fill="none" strokeWidth="1.500" d="M47 40 34 32M50 37l-4-12M51 48 30 50M57 58 38 68M62 65l-6 16M62 43l14-8M70 51l16-2M76 62l12 6" />
        <path d="M118 40q10 2 12 14 8 2 8 12l14 2q-2 10-13 11 4 6 2 13-12 2-16-4-8 4-14-4-7 0-9-6 4-6 12-6-4-4-2-10 6-2 10 1-6-8-4-23Z" />
        <path d="M142 57q10-8 14 0-6 7-14 4ZM150 75q10-4 11 4-8 6-13-1ZM134 44q6-4 8 2l-6 6Z" />
        <path strokeWidth="1.500" d="M180 61q6-6 9 1l-3 8-6-1ZM200 61q7-4 8 5l-6 5-5-5ZM189 76q7-2 7 5l-5 6-5-5ZM186 98l4-22M190 88l11-18" />
        <path d="M25 151q15-13 28-22 13-7 27-2l22-1 6-9 3 6 5-6v11l6 7-9 4-7 7-4 12 6 6-9-2-4-17-25-3-13 6-4 10-10 3 6-14-2-9-18 9q-8 8-6 6Z" />
        <path fill="none" strokeWidth="3.500" d="M160 158v-20M160 150q-14 0-18-12M160 150q14 0 18-12M160 138q-8-4-8-14M160 138q8-4 8-14M160 122v-6M142 138l-6-6M142 138l1-10M178 138l6-6M178 138l-1-10M152 124l-5-4M168 124l5-4M146 152l-10-3M174 152l10-3M150 159l-8 1M170 159l8 1M136 142l-4-2M184 142l4-2" />
        <path fill="none" strokeWidth="5" d="M222 96q-12 16-4 36 8 22 34 30 24-4 28-26 0-26-20-38-20-8-38-2ZM211 86l11 12M231 90l-1 8M262 160l14 10 3 14" />
        <path fill="none" strokeWidth="3" d="M236 108q4-8 10 0-4 8-10 0M254 108q5-6 9 1-5 6-9-1M228 118q6 5 10-1 6 8 12 0 5 8 12 1 4 6 10 2M226 128q7 8 12 1 6 8 13 0 6 8 13 0 5 6 10 1M232 140q7 7 12 0 6 8 13 0 6 6 11-1M242 150q8 6 20 0M246 112l-2 18M234 122l4 20M258 120l-2 20" />
        <path fill="none" strokeWidth="7" d="M107 212q-9-19 6-26 22-7 42-2 11 8 4 19-16 10-32 2-11-9-1-14 16-3 24 8 7 12-3 18-18 2-27-5M107 210l-5 0" />
        <path d="M190 163q10 0 11 17 4 15 12 21-3 7-13-4l-8-12-8 21-12 4q-2-19 18-47Z" />
      </g>
      <text x="155" y="279" textAnchor="middle" fontFamily="Lato, sans-serif" fontSize="39" fill="#111">CALeDNA</text>
    </svg>
  );
}

function SlidersIcon() {
  return (
    <svg width="28" height="28" viewBox="0 0 28 28" fill="none" stroke="#333" strokeLinecap="round" aria-hidden="true">
      <path strokeWidth="3.6" d="M2 5h24M2 14h24M2 22.500h24" />
      <path strokeWidth="4.400" d="M14 3.400v3.200M21 12.400v3.200M7 21v3.200" />
    </svg>
  );
}

function LayersIcon() {
  return (
    <svg width="26" height="26" viewBox="0 0 26 26" aria-hidden="true">
      <path d="M0 17 13 25.500 26 17V15L13 23 0 15Z" fill="#969696" />
      <path d="M0 15.500 13 24 26 15.500 22 13 13 19 4 13Z" fill="#b4b4b4" />
      <path d="M0 13 13 21.500 26 13V11.500L13 19.500 0 11.500Z" fill="#8e8e8e" />
      <path d="M0 11.500 13 20 26 11.500 23 9.500 13 16 3 9.500Z" fill="#c4c4c4" />
      <path d="M0 9 13 17.500 26 9V8.200L13 16.500 0 8.200Z" fill="#8e8e8e" />
      <path d="M13 0 26 8.400 13 16.700 0 8.400Z" fill="#e2e2e2" />
      <path d="M13 4 22 9 13 15 4 9Z" fill="#cfcfcf" />
    </svg>
  );
}

export default function App() {
  return (
    <>
      <GlobalStyle />
      <Header>
        <LogoLink href="#home"><Logo /></LogoLink>
        <Nav>
          <NavLink href="#about">ABOUT</NavLink>
          <NavLink href="#explore">EXPLORE DATA</NavLink>
          <NavLink href="#involved">GET INVOLVED</NavLink>
          <NavLink href="#news">NEWS AND OUTPUTS</NavLink>
          <NavLink href="#signin" $end>SIGN IN</NavLink>
        </Nav>
      </Header>
      <Main>
        <Title>Sites</Title>
        <Stats>
          <span>6,206 Sites</span>
          <span>2,170 Sites with results</span>
          <span>38,131 Taxa</span>
        </Stats>
        <Intro>
          Here's all the soil, sediment, and water samples that were collected in the field and sent back to CALeDNA for genetic analyses.
        </Intro>
        <Count><Dot />6206 sites</Count>
        <SearchForm onSubmit={(e) => e.preventDefault()}>
          <ScopeBox>
            <Scope aria-label="Search in"><option>Sites</option></Scope>
            <svg width="8" height="5" viewBox="0 0 8 5" aria-hidden="true"><path d="M0 0h8L4 4Z" fill="#333" /></svg>
          </ScopeBox>
          <SearchInput type="text" placeholder="Search site and project names" aria-label="Search site and project names" />
          <SearchButton type="submit" aria-label="Search"><FaSearch size={28} /></SearchButton>
        </SearchForm>
        <Toolbar>
          <Group>
            <ToolButton $active $radius="4px 0 0 4px"><PinIcon /><span>Map</span></ToolButton>
            <ToolButton $radius="0 4px 4px 0"><FaRegListAlt size={28} /><span>List</span></ToolButton>
          </Group>
          <ToolButton><SlidersIcon /><span>Filters</span></ToolButton>
        </Toolbar>
        <MapFrame aria-label="Site map">
          <MapTiles />
          {clusters.map(([count, x, y, tone]) => (
            <Cluster key={`${x}-${y}`} $x={x} $y={y} $tone={tone}><span>{count}</span></Cluster>
          ))}
          <SiteMarker $x={375} $y={361} aria-label="Site" />
          <Controls $side="left">
            <ControlBar>
              <ControlButton aria-label="Zoom in">+</ControlButton>
              <ControlButton aria-label="Zoom out">−</ControlButton>
            </ControlBar>
            <ControlBar><InfoButton aria-label="Information">i</InfoButton></ControlBar>
          </Controls>
          <Controls $side="right">
            <ControlBar>
              <ControlButton $size={44} aria-label="Layers"><LayersIcon /></ControlButton>
            </ControlBar>
          </Controls>
        </MapFrame>
      </Main>
    </>
  );
}
